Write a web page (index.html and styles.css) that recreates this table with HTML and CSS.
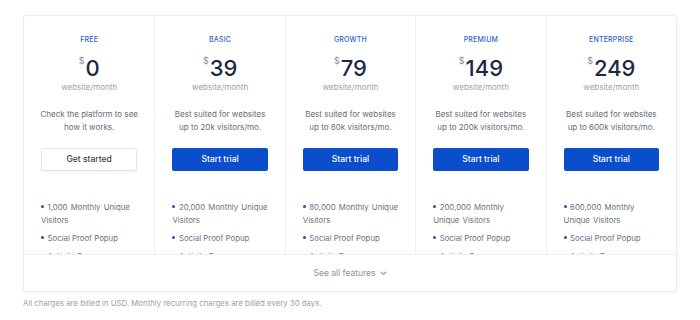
FILE: index.html
```html
<!DOCTYPE html>
<html>
<head>
<meta charset="utf-8">
<link rel="stylesheet" href="styles.css">
</head>
<body>
<div class="page">
  <div class="card">
    <div class="plans">
      <div class="plan">
        <div class="name">FREE</div>
        <div class="price"><span class="cur">$</span><span class="amt">0</span></div>
        <div class="per">website/month</div>
        <p class="desc">Check the platform to see how it works.</p>
        <a class="btn btn-outline">Get started</a>
        <ul class="features">
          <li>1,000 Monthly Unique Visitors</li>
          <li>Social Proof Popup</li>
          <li>Activity Popup</li>
        </ul>
      </div>
      <div class="plan">
        <div class="name">BASIC</div>
        <div class="price"><span class="cur">$</span><span class="amt">39</span></div>
        <div class="per">website/month</div>
        <p class="desc">Best suited for websites up to 20k visitors/mo.</p>
        <a class="btn">Start trial</a>
        <ul class="features">
          <li>20,000 Monthly Unique Visitors</li>
          <li>Social Proof Popup</li>
          <li>Activity Popup</li>
        </ul>
      </div>
      <div class="plan">
        <div class="name">GROWTH</div>
        <div class="price"><span class="cur">$</span><span class="amt">79</span></div>
        <div class="per">website/month</div>
        <p class="desc">Best suited for websites up to 80k visitors/mo.</p>
        <a class="btn">Start trial</a>
        <ul class="features">
          <li>80,000 Monthly Unique Visitors</li>
          <li>Social Proof Popup</li>
          <li>Activity Popup</li>
        </ul>
      </div>
      <div class="plan">
        <div class="name">PREMIUM</div>
        <div class="price"><span class="cur">$</span><span class="amt">149</span></div>
        <div class="per">website/month</div>
        <p class="desc">Best suited for websites up to 200k visitors/mo.</p>
        <a class="btn">Start trial</a>
        <ul class="features">
          <li>200,000 Monthly Unique Visitors</li>
          <li>Social Proof Popup</li>
          <li>Activity Popup</li>
        </ul>
      </div>
      <div class="plan">
        <div class="name">ENTERPRISE</div>
        <div class="price"><span class="cur">$</span><span class="amt">249</span></div>
        <div class="per">website/month</div>
        <p class="desc">Best suited for websites up to 600k visitors/mo.</p>
        <a class="btn">Start trial</a>
        <ul class="features">
          <li>600,000 Monthly Unique Visitors</li>
          <li>Social Proof Popup</li>
          <li>Activity Popup</li>
        </ul>
      </div>
    </div>
    <div class="more">
      <span>See all features</span>
      <svg class="chev" width="7" height="5" viewBox="0 0 7 5"><path d="M1 1l2.5 2.5L6 1" fill="none" stroke="#9aa0a8" stroke-width="1.1" stroke-linecap="round" stroke-linejoin="round"/></svg>
    </div>
  </div>
  <p class="note">All charges are billed in USD. Monthly recurring charges are billed every 30 days.</p>
</div>
</body>
</html>
```
FILE: styles.css
```css
* { box-sizing: border-box; }
html, body { margin: 0; padding: 0; background: #fff; }
body { font-family: Inter, "Noto Sans", sans-serif; color: #6b7280; }
.page { padding: 15px 23px 0 23px; width: 700px; }
.card {
  width: 654px;
  border: 1px solid #ececef;
  border-radius: 3px;
  background: #fff;
  box-shadow: 0 1px 3px rgba(0,0,0,0.06);
}
.plans {
  display: grid;
  grid-template-columns: repeat(5, 1fr);
  height: 238px;
  overflow: hidden;
}
.plan {
  padding: 19px 17px 0 17px;
  border-left: 1px solid #eef0f3;
  text-align: center;
}
.plan:first-child { border-left: none; }
.name {
  font-size: 7px;
  font-weight: 500;
  color: #2f5fc9;
  letter-spacing: 0.2px;
  line-height: 10px;
}
.price {
  margin-top: 10px;
  color: #1b2747;
  display: flex;
  justify-content: center;
  align-items: flex-start;
  height: 26px;
}
.cur { font-size: 9px; color: #8a8f99; line-height: 12px; margin-right: 1px; }
.amt { font-size: 22px; line-height: 26px; font-weight: 500; }
.per { font-size: 8px; color: #9ca1a9; line-height: 12px; }
.desc {
  margin: 15px -1px 0 -1px;
  font-size: 8px;
  line-height: 13px;
  color: #666c75;
  height: 26px;
}
.btn {
  display: block;
  margin-top: 14px;
  height: 23px;
  line-height: 23px;
  border-radius: 2px;
  background: #0a4ecb;
  color: #fff;
  font-size: 8.5px;
  font-weight: 500;
}
.btn-outline {
  background: #fff;
  color: #3a3f47;
  border: 1px solid #e4e6ea;
  line-height: 21px;
  box-shadow: 0 1px 2px rgba(0,0,0,0.06);
}
.features {
  list-style: none;
  margin: 30px 0 0 0;
  padding: 0;
  text-align: left;
}
.features li {
  font-size: 7.8px;
  line-height: 13px;
  color: #6b7280;
  margin-bottom: 5px;
}
.features li::before {
  content: "";
  display: inline-block;
  width: 3px;
  height: 3px;
  border-radius: 50%;
  background: #1f4fb8;
  margin-right: 3.5px;
  vertical-align: 2px;
}
.features li:first-child { word-spacing: 1px; }
.more {
  border-top: 1px solid #eceef1;
  height: 37px;
  display: flex;
  align-items: center;
  justify-content: center;
  gap: 4px;
  font-size: 8.5px;
  color: #8e939b;
}
.note {
  margin: 6px 0 0 0;
  font-size: 7.8px;
  color: #9a9fa7;
}
```
